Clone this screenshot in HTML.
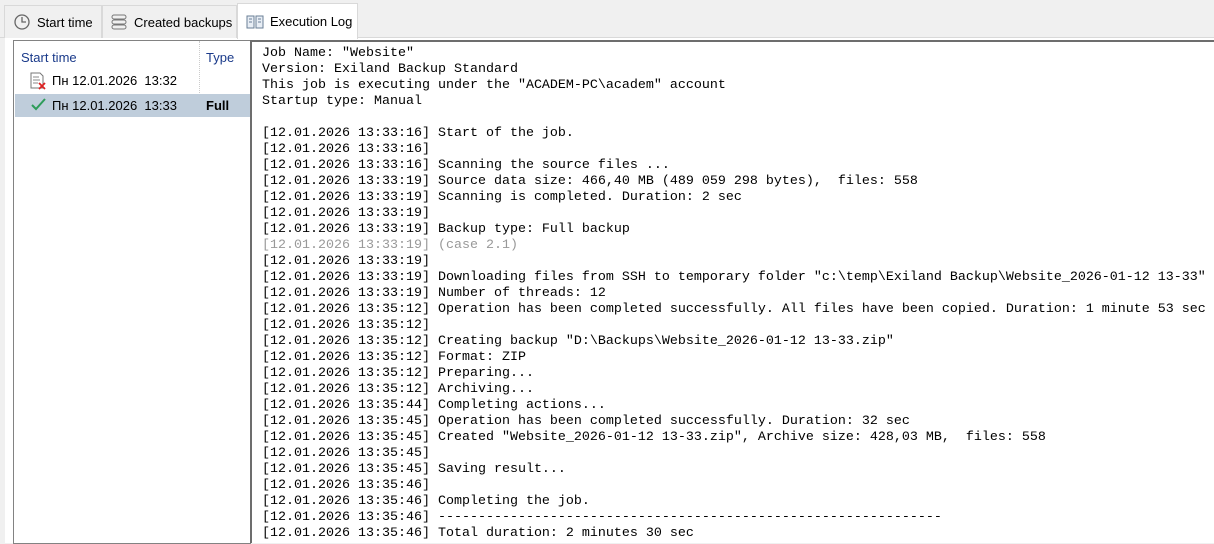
<!DOCTYPE html>
<html><head><meta charset="utf-8"><style>
*{margin:0;padding:0;box-sizing:border-box}
body{width:1214px;height:543px;overflow:hidden;background:#f0f0f0;font-family:"Liberation Sans",sans-serif;position:relative}
.tab{position:absolute;top:5px;height:33px;font-size:13px;color:#000;display:flex;align-items:center;border:1px solid #d9d9d9;border-bottom:none;background:#f0f0f0}
.tab.act{top:3px;height:36px;background:#fff;z-index:2}
.line{position:absolute;left:0;top:37px;width:1214px;height:1px;background:#d9d9d9}
.panel{position:absolute;left:5px;top:38px;width:1209px;height:505px;background:#fff}
.list{position:absolute;left:13px;top:40px;width:238px;height:504px;border:1px solid #828282;border-right:none;background:#fff;font-size:13px}
.log{position:absolute;left:250px;top:40px;width:964px;height:503px;border-left:2px solid #6d6d6d;border-top:2px solid #6d6d6d;background:#fff;font-family:"Liberation Mono",monospace;font-size:13.33px;line-height:16px;white-space:pre;padding:4px 0 0 10px;color:#000}
.g{color:#999}
</style></head><body>
<div class="line"></div>
<div class="tab" style="left:4px;width:98px"><svg width="18" height="18" style="margin:0 6px 0 8px" viewBox="0 0 18 18"><circle cx="9" cy="9" r="7" fill="none" stroke="#666" stroke-width="1.3"/><path d="M9 4v5h4" fill="none" stroke="#666" stroke-width="1.3"/></svg>Start time</div>
<div class="tab" style="left:102px;width:135px"><svg width="18" height="18" style="margin:0 6px 0 7px" viewBox="0 0 18 18"><rect x="2" y="2" width="14" height="4" rx="2" fill="none" stroke="#777"/><rect x="2" y="7" width="14" height="4" rx="2" fill="none" stroke="#777"/><rect x="2" y="12" width="14" height="4" rx="2" fill="none" stroke="#777"/></svg>Created backups</div>
<div class="tab act" style="left:237px;width:121px"><svg width="18" height="16" style="margin:0 6px 0 8px" viewBox="0 0 18 16"><path d="M1 2h7v12H1zM10 2h7v12h-7z" fill="#e8eef5" stroke="#6a7f96"/><path d="M3 5h3M3 8h3M12 5h3M12 8h3" stroke="#6a7f96"/></svg>Execution Log</div>
<div class="panel"></div>
<div class="list">
<div style="position:absolute;left:7px;top:9px;color:#1a3a8a">Start time</div>
<div style="position:absolute;left:185px;top:0;width:1px;height:60px;border-left:1px dotted #ccc"></div>
<div style="position:absolute;left:192px;top:9px;color:#1a3a8a">Type</div>
<div style="position:absolute;left:15px;top:31px;width:18px;height:18px"><svg width="18" height="18" viewBox="0 0 18 18"><path d="M2 1h9l3 3v12H2z" fill="#fff" stroke="#777"/><path d="M4 5h6M4 8h7M4 11h5" stroke="#888"/><path d="M10 11l6 6M16 11l-6 6" stroke="#d22" stroke-width="1.8"/></svg></div>
<div style="position:absolute;left:38px;top:32px">Пн 12.01.2026&nbsp;&nbsp;13:32</div>
<div style="position:absolute;left:1px;top:53px;width:236px;height:23px;background:#bfcddb"></div>
<svg style="position:absolute;left:17px;top:57px" width="15" height="13" viewBox="0 0 15 13"><path d="M1 7l4 4 9-10" fill="none" stroke="#2e9c5a" stroke-width="2"/></svg>
<div style="position:absolute;left:38px;top:57px">Пн 12.01.2026&nbsp;&nbsp;13:33</div>
<div style="position:absolute;left:192px;top:57px;font-weight:bold">Full</div>
</div>
<div class="log">Job Name: "Website"
Version: Exiland Backup Standard
This job is executing under the "ACADEM-PC\academ" account
Startup type: Manual

[12.01.2026 13:33:16] Start of the job.
[12.01.2026 13:33:16]
[12.01.2026 13:33:16] Scanning the source files ...
[12.01.2026 13:33:19] Source data size: 466,40 MB (489 059 298 bytes),  files: 558
[12.01.2026 13:33:19] Scanning is completed. Duration: 2 sec
[12.01.2026 13:33:19]
[12.01.2026 13:33:19] Backup type: Full backup
<span class="g">[12.01.2026 13:33:19] (case 2.1)</span>
[12.01.2026 13:33:19]
[12.01.2026 13:33:19] Downloading files from SSH to temporary folder "c:\temp\Exiland Backup\Website_2026-01-12 13-33"
[12.01.2026 13:33:19] Number of threads: 12
[12.01.2026 13:35:12] Operation has been completed successfully. All files have been copied. Duration: 1 minute 53 sec
[12.01.2026 13:35:12]
[12.01.2026 13:35:12] Creating backup "D:\Backups\Website_2026-01-12 13-33.zip"
[12.01.2026 13:35:12] Format: ZIP
[12.01.2026 13:35:12] Preparing...
[12.01.2026 13:35:12] Archiving...
[12.01.2026 13:35:44] Completing actions...
[12.01.2026 13:35:45] Operation has been completed successfully. Duration: 32 sec
[12.01.2026 13:35:45] Created "Website_2026-01-12 13-33.zip", Archive size: 428,03 MB,  files: 558
[12.01.2026 13:35:45]
[12.01.2026 13:35:45] Saving result...
[12.01.2026 13:35:46]
[12.01.2026 13:35:46] Completing the job.
[12.01.2026 13:35:46] ---------------------------------------------------------------
[12.01.2026 13:35:46] Total duration: 2 minutes 30 sec</div>
</body></html>
